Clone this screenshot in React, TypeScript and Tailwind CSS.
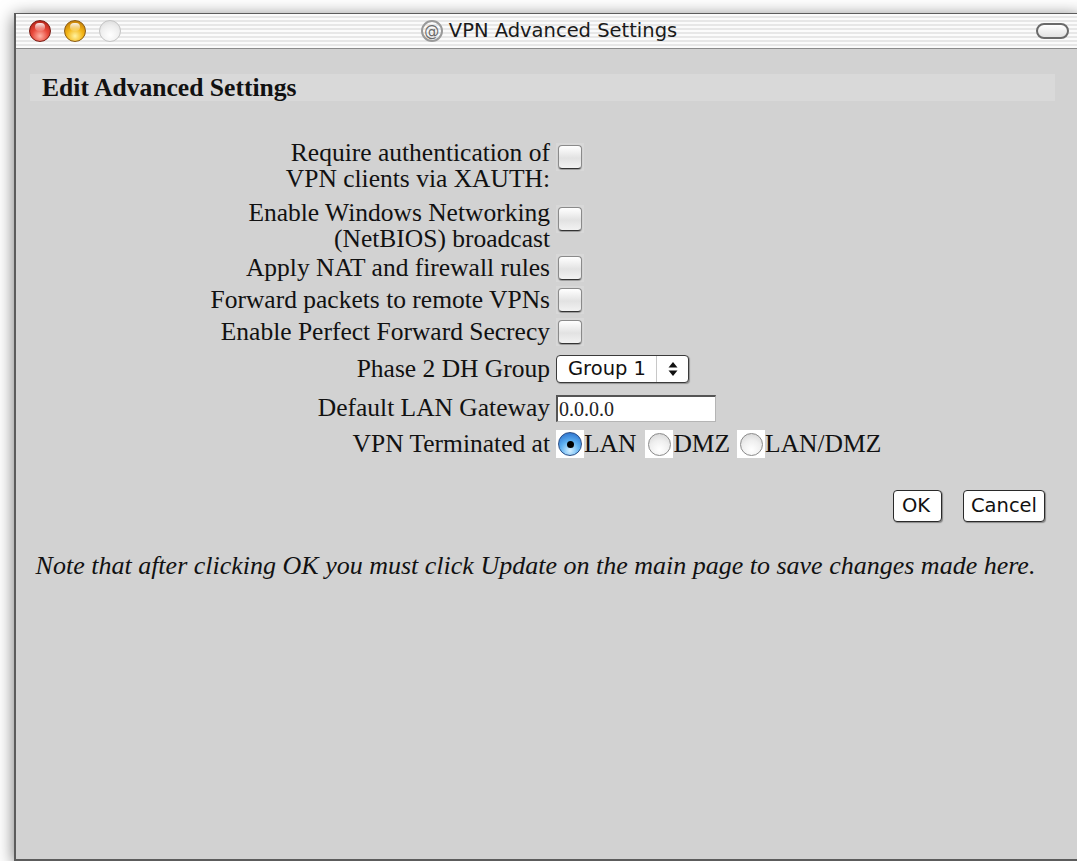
import React from "react";

/* Aqua-era dialog: VPN advanced settings */

function Light({ tone }: { tone: "red" | "yellow" | "off" }) {
  const fill =
    tone === "red"
      ? "bg-[radial-gradient(circle_at_50%_75%,#ffb3a6_0%,#e8483a_45%,#a5170c_100%)] border-[#7a1a12]"
      : tone === "yellow"
        ? "bg-[radial-gradient(circle_at_50%_75%,#fff3a0_0%,#f4b514_45%,#b26a06_100%)] border-[#8a5a10]"
        : "bg-[radial-gradient(circle_at_50%_70%,#ffffff_0%,#eeeeee_55%,#d6d6d6_100%)] border-[#c4c4c4]";
  return (
    <span className={`relative block h-[22px] w-[22px] rounded-full border ${fill}`}>
      {tone !== "off" && (
        <span className="absolute left-[5px] top-[2px] block h-[8px] w-[10px] rounded-full bg-[linear-gradient(to_bottom,rgba(255,255,255,0.9),rgba(255,255,255,0.1))]" />
      )}
    </span>
  );
}

function Checkbox() {
  return (
    <span className="flex h-[28px] w-[28px] items-center justify-center bg-[#d8d8d8]">
      <span className="block h-[24px] w-[24px] rounded-[4px] border border-[#8a8a8a] border-b-[#333] bg-[linear-gradient(to_bottom,#ffffff,#e2e2e2_55%,#f2f2f2)] shadow-[0_1px_1px_rgba(0,0,0,0.3)]" />
    </span>
  );
}

function Radio({ on }: { on?: boolean }) {
  return (
    <span className="flex h-[28px] w-[28px] items-center justify-center bg-white">
      {on ? (
        <span className="flex h-[24px] w-[24px] items-center justify-center rounded-full border border-[#2d4f86] bg-[radial-gradient(circle_at_50%_80%,#d6f0ff_0%,#5fb2f2_45%,#1f62c4_100%)]">
          <span className="block h-[7px] w-[7px] rounded-full bg-black" />
        </span>
      ) : (
        <span className="block h-[23px] w-[23px] rounded-full border border-[#8a8a8a] bg-[radial-gradient(circle_at_50%_75%,#ffffff_0%,#efefef_50%,#cfcfcf_100%)]" />
      )}
    </span>
  );
}

function Row({
  h,
  label,
  align = "center",
  children,
}: {
  h: string;
  label: React.ReactNode;
  align?: "center" | "start";
  children: React.ReactNode;
}) {
  return (
    <div className={`flex ${h} ${align === "start" ? "items-start" : "items-center"}`}>
      <div className="w-[342px] text-right leading-[26px]">{label}</div>
      <div className="ml-[6px]">{children}</div>
    </div>
  );
}

export default function App() {
  return (
    <div className="h-[861px] w-[1077px] overflow-hidden bg-white pl-[14px] pt-[13px]">
      <div className="flex h-[848px] w-[1068px] flex-col border-t border-b-2 border-l-2 border-[#5c5c5c] bg-[#d2d2d2] shadow-[0_3px_16px_rgba(0,0,0,0.55)]">
        {/* title bar */}
        <div className="grid h-[35px] grid-cols-[1fr_auto_1fr] items-center border-b border-[#8c8c8c] bg-[image:repeating-linear-gradient(to_bottom,#fbfbfb_0px,#fbfbfb_2px,#e7e7e7_2px,#e7e7e7_4px)] font-['DejaVu_Sans',sans-serif]">
          <div className="flex items-center gap-[13px] pl-[13px]">
            <Light tone="red" />
            <Light tone="yellow" />
            <Light tone="off" />
          </div>
          <div className="flex items-center gap-[6px] text-[19.5px] text-[#1a1a1a]">
            <span className="flex h-[22px] w-[22px] items-center justify-center rounded-full border-2 border-[#9a9a9a] text-[15px] leading-none text-[#6a6a6a]">
              @
            </span>
            <span>VPN Advanced Settings</span>
          </div>
          <div className="flex justify-end pr-[13px]">
            <span className="block h-[16px] w-[33px] rounded-full border-2 border-[#6a6a6a] bg-[linear-gradient(to_bottom,#ffffff,#e2e2e2)]" />
          </div>
        </div>

        {/* page body */}
        <div className="mr-[27px] ml-[14px] font-['Liberation_Serif','Times_New_Roman',serif] text-[25.5px] text-[#111]">
          <div className="mt-[25px] h-[27px] bg-[#d9d9d9] pl-[12px] text-[25.6px] leading-[27px] font-bold">
            Edit Advanced Settings
          </div>

          <div className="mt-[39px] ml-[178px]">
            <Row
              h="h-[60px]"
              align="start"
              label={
                <>
                  Require authentication of
                  <br />
                  VPN clients via XAUTH:
                </>
              }
            >
              <div className="mt-[3px]">
                <Checkbox />
              </div>
            </Row>
            <Row
              h="h-[52px]"
              align="start"
              label={
                <>
                  Enable Windows Networking
                  <br />
                  (NetBIOS) broadcast
                </>
              }
            >
              <div className="mt-[5px]">
                <Checkbox />
              </div>
            </Row>
            <Row h="h-[32px]" label="Apply NAT and firewall rules">
              <Checkbox />
            </Row>
            <Row h="h-[32px]" label="Forward packets to remote VPNs">
              <Checkbox />
            </Row>
            <Row h="h-[32px]" label="Enable Perfect Forward Secrecy">
              <Checkbox />
            </Row>
            <Row h="h-[42px]" label="Phase 2 DH Group">
              <div className="flex h-[28px] w-[133px] items-stretch rounded-[4px] border-[1.5px] border-[#3a3a3a] bg-white font-['DejaVu_Sans',sans-serif] text-[19.5px] shadow-[1px_1px_1px_rgba(0,0,0,0.3)]">
                <span className="flex flex-1 items-center pl-[11px] leading-none">Group 1</span>
                <span className="flex w-[32px] items-center justify-center border-l border-[#c8c8c8]">
                  <svg width="10" height="16" viewBox="0 0 10 16">
                    <path d="M5 1 L9.5 6.5 H0.5 Z" fill="#111" />
                    <path d="M5 15 L9.5 9.5 H0.5 Z" fill="#111" />
                  </svg>
                </span>
              </div>
            </Row>
            <Row h="h-[36px]" label="Default LAN Gateway">
              <div className="flex h-[27px] w-[160px] items-center border-t-2 border-r border-b border-l-2 border-t-[#555] border-r-[#b5b5b5] border-b-[#b5b5b5] border-l-[#555] bg-white pl-[1px] text-[20px] leading-none text-[#222]">
                0.0.0.0
              </div>
            </Row>
            <Row h="h-[36px]" label="VPN Terminated at">
              <div className="flex items-center leading-[26px]">
                <Radio on />
                <span>LAN</span>
                <span className="ml-[9px]">
                  <Radio />
                </span>
                <span>DMZ</span>
                <span className="ml-[7px]">
                  <Radio />
                </span>
                <span>LAN/DMZ</span>
              </div>
            </Row>
          </div>

          <div className="mt-[28px] flex justify-end gap-[21px] pr-[10px] font-['DejaVu_Sans',sans-serif] text-[19.5px]">
            <button className="h-[32px] w-[49px] rounded-[4px] border-[1.5px] border-[#2a2a2a] bg-white pr-[3px] shadow-[1px_1px_1px_rgba(0,0,0,0.35)]">
              OK
            </button>
            <button className="h-[32px] w-[82px] rounded-[4px] border-[1.5px] border-[#2a2a2a] bg-white shadow-[1px_1px_1px_rgba(0,0,0,0.35)]">
              Cancel
            </button>
          </div>

          <p className="mt-[31px] pr-[14px] text-center text-[26px] leading-[26px] italic">
            Note that after clicking OK you must click Update on the main page to save changes made
            here.
          </p>
        </div>
      </div>
    </div>
  );
}
